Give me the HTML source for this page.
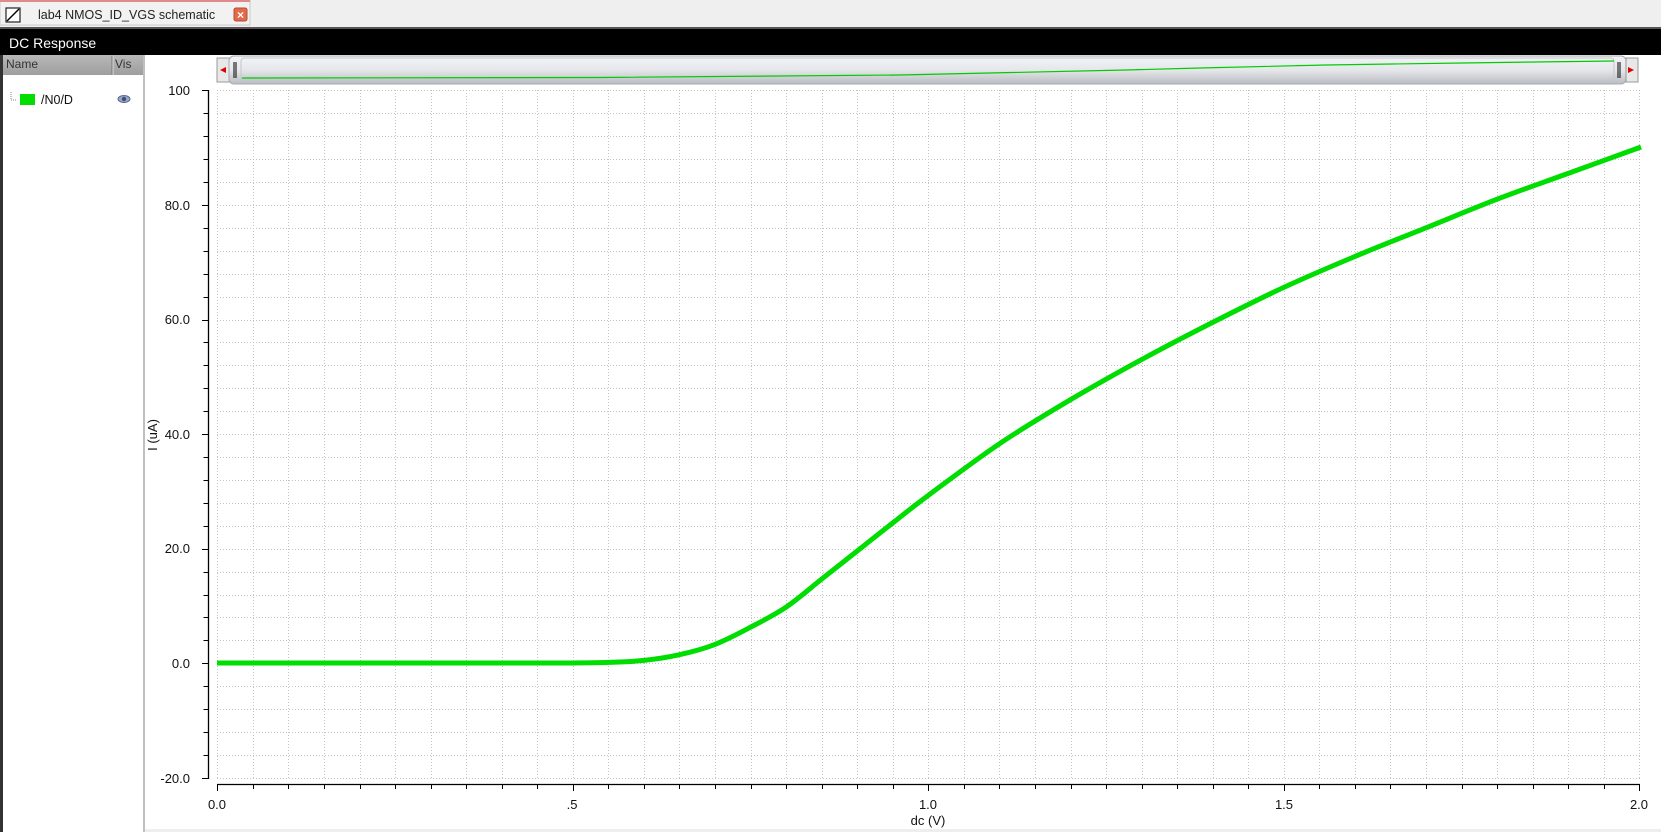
<!DOCTYPE html>
<html><head><meta charset="utf-8"><style>
html,body{margin:0;padding:0;width:1661px;height:832px;overflow:hidden;background:#fff;font-family:"Liberation Sans","DejaVu Sans",sans-serif;}
</style></head><body>
<svg width="1661" height="832" xmlns="http://www.w3.org/2000/svg" style="position:absolute;left:0;top:0" font-family="Liberation Sans, DejaVu Sans, sans-serif">
<defs>
<linearGradient id="tg" x1="0" y1="0" x2="0" y2="1">
<stop offset="0" stop-color="#f4f5f7"/><stop offset="0.5" stop-color="#e6e7ea"/><stop offset="1" stop-color="#b9bcc2"/>
</linearGradient>
<linearGradient id="hg" x1="0" y1="0" x2="0" y2="1">
<stop offset="0" stop-color="#b8b8b8"/><stop offset="1" stop-color="#9e9e9e"/>
</linearGradient>
</defs>
<rect x="0" y="0" width="1661" height="28" fill="#efefef"/>
<rect x="0" y="0" width="250" height="25" fill="#f2f2f2" stroke="#c9c9c9"/>
<rect x="0" y="0" width="250" height="2" fill="#e08a8a"/>
<rect x="6" y="8" width="14" height="14" fill="#fff" stroke="#222" stroke-width="1.2"/>
<line x1="7" y1="21" x2="19" y2="9" stroke="#000" stroke-width="1.4"/>
<text x="38" y="19" font-size="12.5" fill="#222">lab4 NMOS_ID_VGS schematic</text>
<rect x="234" y="8" width="13" height="13" rx="2" fill="#e26a4a" stroke="#b94a30"/>
<text x="240.5" y="19" font-size="12" fill="#fff" text-anchor="middle" font-weight="bold">×</text>
<rect x="0" y="27" width="1661" height="2" fill="#555"/>
<rect x="0" y="29" width="1661" height="26" fill="#000"/>
<text x="9" y="48" font-size="14" fill="#fff">DC Response</text>
<rect x="0" y="55" width="3" height="777" fill="#333"/>
<rect x="3" y="55" width="141" height="20" fill="url(#hg)"/>
<line x1="112" y1="56" x2="112" y2="75" stroke="#777"/>
<line x1="113" y1="56" x2="113" y2="75" stroke="#ddd"/>
<text x="6" y="68" font-size="12" fill="#333">Name</text>
<text x="115" y="68" font-size="12" fill="#333">Vis</text>
<rect x="143" y="55" width="2" height="777" fill="#c0c0c0"/>
<line x1="11" y1="92" x2="11" y2="100" stroke="#888" stroke-dasharray="1,1"/>
<line x1="11" y1="100" x2="16" y2="100" stroke="#888" stroke-dasharray="1,1"/>
<rect x="20" y="94" width="15" height="11" fill="#00dd00"/>
<text x="41" y="104" font-size="12.5" fill="#111">/N0/D</text>
<ellipse cx="124" cy="99" rx="6" ry="3.5" fill="#9aa8c4" stroke="#5a6a90"/>
<circle cx="124" cy="99" r="2.2" fill="#3d4f7a"/>
<rect x="217" y="58" width="13" height="24" fill="#e8e8e8" stroke="#999"/>
<polygon points="220,70 226,67 226,73" fill="#d00"/>
<rect x="229" y="56" width="1397" height="28" rx="5" fill="url(#tg)" stroke="#a8abb2"/>
<rect x="241" y="58" width="1373" height="22" rx="3" fill="none" stroke="#c4c7cc"/>
<line x1="234" y1="62" x2="234" y2="78" stroke="#000"/><line x1="236" y1="62" x2="236" y2="78" stroke="#000"/>
<line x1="1618" y1="62" x2="1618" y2="78" stroke="#000"/><line x1="1620" y1="62" x2="1620" y2="78" stroke="#000"/>
<rect x="1626" y="58" width="12" height="24" fill="#e8e8e8" stroke="#999"/>
<polygon points="1634,70 1628,67 1628,73" fill="#d00"/>
<polyline points="242,78 600,77.5 900,75 1126,70 1200,68 1326,65 1392,64 1462,63 1536,62 1614,61" fill="none" stroke="#00cc00" stroke-width="1.2"/>
<g id="grid"></g>
<line x1="208.5" y1="90" x2="208.5" y2="779" stroke="#000" stroke-width="1.3"/>
<line x1="217.3" y1="784.5" x2="1640" y2="784.5" stroke="#000" stroke-width="1.3"/>
<g id="ticks"></g>
<g font-size="13" fill="#111" text-anchor="end">
<text x="190" y="95">100</text>
<text x="190" y="210">80.0</text>
<text x="190" y="324">60.0</text>
<text x="190" y="439">40.0</text>
<text x="190" y="553">20.0</text>
<text x="190" y="668">0.0</text>
<text x="190" y="783">-20.0</text>
</g>
<text transform="translate(157,435) rotate(-90)" font-size="13" fill="#111" text-anchor="middle">I (uA)</text>
<g font-size="13" fill="#111" text-anchor="middle">
<text x="217" y="809">0.0</text>
<text x="572" y="809">.5</text>
<text x="928" y="809">1.0</text>
<text x="1284" y="809">1.5</text>
<text x="1639" y="809">2.0</text>
<text x="928" y="825">dc (V)</text>
</g>
<rect x="145" y="829" width="1516" height="3" fill="#eee"/>
<path id="curve" d="" fill="none" stroke="#00dd00" stroke-width="5" stroke-linejoin="round"/>
</svg>
<script>
(function(){
var ns="http://www.w3.org/2000/svg";
var g=document.getElementById("grid"),t=document.getElementById("ticks");
function L(p,x1,y1,x2,y2,s,d){var l=document.createElementNS(ns,"line");l.setAttribute("x1",x1);l.setAttribute("y1",y1);l.setAttribute("x2",x2);l.setAttribute("y2",y2);l.setAttribute("stroke",s);if(d)l.setAttribute("stroke-dasharray",d);p.appendChild(l);}
for(var i=0;i<=40;i++){var x=Math.round(217.3+i*35.55)+0.5;L(g,x,90,x,778,"#c4c4c4","1,2");L(t,x,784,x,i%10==0?791:789,"#000");}
for(var j=0;j<=30;j++){var y=Math.round(90.3+j*22.92)+0.5;L(g,217,y,1640,y,"#c4c4c4","1,2");L(t,j%5==0?202:203.5,y,208,y,"#000");}
var P=[[217,663],[573,663],[608.4,662.4],[644,660.4],[679.5,654.7],[715,644.4],[750.5,627.2],[786,607.2],[821.7,579.1],[857.2,551],[892.8,522.9],[928.3,495.4],[999.4,443.8],[1070.5,399.7],[1141.6,359.6],[1212.7,322.4],[1283.8,287.4],[1354.9,256.5],[1426,227.8],[1497.1,199.2],[1568.2,173.4],[1641,147]];
var d="M"+P[1][0]+","+P[1][1];
d="M217,663 L573,663";
for(var k=1;k<P.length-1;k++){var p0=P[k-1],p1=P[k],p2=P[k+1],p3=P[Math.min(k+2,P.length-1)];
if(k==1)p0=p1;
var c1x=p1[0]+(p2[0]-p0[0])/6,c1y=p1[1]+(p2[1]-p0[1])/6,c2x=p2[0]-(p3[0]-p1[0])/6,c2y=p2[1]-(p3[1]-p1[1])/6;
d+=" C"+c1x+","+c1y+" "+c2x+","+c2y+" "+p2[0]+","+p2[1];}
document.getElementById("curve").setAttribute("d",d);
})();
</script>
</body></html>
